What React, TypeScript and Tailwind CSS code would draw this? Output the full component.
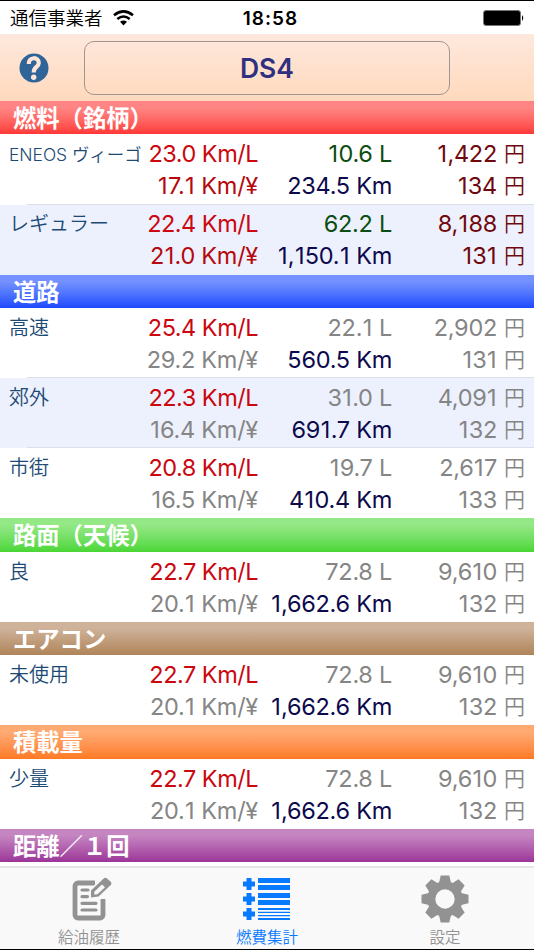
import React from "react";

type Cell = { text: string; color: string };
type Row = {
  name: string;
  small?: boolean;
  height: string;
  shaded?: boolean;
  divider?: boolean;
  top: [Cell, Cell, string];
  bottom: [Cell, Cell, string];
  yen: string;
};
type Section = { title: string; look: string; rows: Row[] };

const RED = "text-[#cb0710] tracking-[-0.5px]";
const DARK_RED = "text-[#b5090f]";
const GREEN = "text-[#0b4d12]";
const NAVY = "text-[#0c0a4d]";
const GRAY = "text-[#858585]";
const MAROON = "text-[#70090d]";

const row = (
  name: string,
  kmL: string,
  litres: string,
  price: string,
  kmYen: string,
  km: string,
  unit: string,
  extra: Partial<Row> = {},
  vivid = false,
): Row => ({
  name,
  height: "h-[70px] pt-px",
  top: [{ text: kmL, color: RED }, { text: litres, color: vivid ? GREEN : GRAY }, price],
  bottom: [{ text: kmYen, color: vivid ? DARK_RED : GRAY }, { text: km, color: NAVY }, unit],
  yen: vivid ? MAROON : GRAY,
  ...extra,
});

const sections: Section[] = [
  {
    title: "燃料（銘柄）",
    look: "h-[33px] from-[#ff8585] to-[#ff3737]",
    rows: [
      row("ENEOS ヴィーゴ", "23.0 Km/L", "10.6 L", "1,422", "17.1 Km/¥", "234.5 Km", "134", { small: true, height: "h-[71px] pt-px", divider: true }, true),
      row("レギュラー", "22.4 Km/L", "62.2 L", "8,188", "21.0 Km/¥", "1,150.1 Km", "131", { shaded: true, height: "h-[70px]" }, true),
    ],
  },
  {
    title: "道路",
    look: "h-[33px] from-[#7590ff] to-[#1f48ff]",
    rows: [
      row("高速", "25.4 Km/L", "22.1 L", "2,902", "29.2 Km/¥", "560.5 Km", "131", { divider: true }),
      row("郊外", "22.3 Km/L", "31.0 L", "4,091", "16.4 Km/¥", "691.7 Km", "132", { shaded: true, divider: true }),
      row("市街", "20.8 Km/L", "19.7 L", "2,617", "16.5 Km/¥", "410.4 Km", "133"),
    ],
  },
  {
    title: "路面（天候）",
    look: "h-[34px] from-[#94e886] to-[#49d634]",
    rows: [row("良", "22.7 Km/L", "72.8 L", "9,610", "20.1 Km/¥", "1,662.6 Km", "132")],
  },
  {
    title: "エアコン",
    look: "h-[33px] from-[#ceb299] to-[#b0845a]",
    rows: [row("未使用", "22.7 Km/L", "72.8 L", "9,610", "20.1 Km/¥", "1,662.6 Km", "132")],
  },
  {
    title: "積載量",
    look: "h-[34px] from-[#ffaa73] to-[#ff7a20]",
    rows: [row("少量", "22.7 Km/L", "72.8 L", "9,610", "20.1 Km/¥", "1,662.6 Km", "132")],
  },
  {
    title: "距離／１回",
    look: "h-[33px] from-[#c585c1] to-[#9b3498]",
    rows: [],
  },
];

// The digit 1 gets a little room on both sides so that it sits like the wider digits.
function Figures({ text }: { text: string }) {
  return (
    <>
      {text.split(/(1)/).map((part, i) =>
        part === "1" ? (
          <span key={i} className="px-[0.6px]">1</span>
        ) : (
          part
        ),
      )}
    </>
  );
}

function Line({ cells, yen }: { cells: [Cell, Cell, string]; yen: string }) {
  return (
    <div className="flex h-8 items-center justify-end whitespace-nowrap text-[23.5px] font-[380] leading-8 tracking-[-0.27px]">
      <span className={`w-[116px] text-right ${cells[0].color}`}><Figures text={cells[0].text} /></span>
      <span className={`w-[134px] text-right ${cells[1].color}`}><Figures text={cells[1].text} /></span>
      <span className={`flex w-[133px] justify-end ${yen}`}>
        <span><Figures text={cells[2]} /></span>
        <span className="ml-[7px] h-8 font-['Noto_Sans_CJK_JP',sans-serif] text-[21px] font-[350] leading-[28px] tracking-normal">円</span>
      </span>
    </div>
  );
}

function DataRow({ r }: { r: Row }) {
  return (
    <div className={`relative flex ${r.height} ${r.shaded ? "bg-[#edf1fd]" : "bg-white"}`}>
      <div
        className={`w-[142px] shrink-0 whitespace-nowrap pl-[9px] font-[350] text-[#1c4a75] ${
          r.small ? "pt-[4px] text-[17.4px]" : "pt-[3px] text-[20px]"
        } leading-8`}
      >
        {r.name}
      </div>
      <div className="flex flex-1 flex-col pr-[9px] pt-[3px]">
        <Line cells={r.top} yen={r.yen} />
        <Line cells={r.bottom} yen={r.yen} />
      </div>
      {r.divider && <div className="absolute bottom-0 left-[27px] right-0 h-px bg-[#dcdfe8]" />}
    </div>
  );
}

function NoteIcon() {
  return (
    <svg className="ml-[6px]" width="40" height="46" viewBox="0 0 40 46" fill="none">
      <path d="M23 7H6a3 3 0 0 0-3 3v29a3 3 0 0 0 3 3h22a3 3 0 0 0 3-3V23" stroke="#929292" strokeWidth="4.800" />
      <path d="M10 14h6M10 20.600h5.500M10 27.300h14M10 34h14" stroke="#929292" strokeWidth="3.200" strokeLinecap="round" />
      <path d="M17 23l1-9L31 0l9 7-14 15z" fill="#f9f9f9" />
      <path d="M19 21.500V14.500L32 2.300q1.500-1 3 .200l4 3.500q1 1.300 0 2.700L26.500 20.500z" fill="#929292" />
      <path d="M22 18.500l.5-3 7.500-7 3 2.700-7.500 7z" fill="#f9f9f9" />
    </svg>
  );
}

function ListIcon() {
  return (
    <svg width="48" height="44" viewBox="0 0 48 44" fill="#087aff">
      {[0, 15, 30].map((y) => (
        <path key={y} d={`M3.500 ${y + 1}h5v3.500h3.500v5h-3.500v3.500h-5v-3.500h-3.500v-5h3.500z`} />
      ))}
      <path d="M15 1h32v5h-32zM15 8h32v5h-32zM15 16h32v5h-32zM15 23h32v5h-32zM15 31h32v2h-32zM15 34.700h32v1.300h-32zM15 38h32v1.300h-32zM15 41h32v2h-32z" />
    </svg>
  );
}

function GearIcon() {
  return (
    <svg width="48" height="48" viewBox="-24 -24 48 48" fill="#929292">
      {[0, 45, 90, 135, 180, 225, 270, 315].map((a) => (
        <path key={a} d="M-6.500 -14L-4.300 -23.500H4.300L6.500 -14z" transform={`rotate(${a})`} />
      ))}
      <circle r="13.700" fill="none" stroke="#929292" strokeWidth="8" />
    </svg>
  );
}

function Tab({ label, active, children }: { label: string; active?: boolean; children: React.ReactNode }) {
  return (
    <div className="flex w-[178px] flex-col items-center">
      <div className="flex h-[62px] items-center justify-center">{children}</div>
      <div className={`text-[15.500px] font-[350] leading-4 ${active ? "text-[#087aff]" : "text-[#929292]"}`}>{label}</div>
    </div>
  );
}

export default function App() {
  return (
    <div className="flex h-[950px] w-[534px] flex-col overflow-hidden border-y border-black bg-white font-['Inter','Noto_Sans_CJK_JP',sans-serif]">
      <div className="grid h-[33px] shrink-0 grid-cols-3 items-center">
        <div className="flex items-center gap-[10px] pl-[10px] text-[18.500px] font-[350] leading-8 text-black">
          通信事業者
          <svg width="21" height="16" viewBox="0 0 21 16" fill="none" stroke="#000" strokeWidth="2.600">
            <path d="M1 5.200Q10.500-2.500 20 5.200M4.300 9Q10.500 4 16.700 9" />
            <path d="M7 11.800Q10.500 9.300 14 11.800L10.500 15.500z" fill="#000" stroke="none" />
          </svg>
        </div>
        <div className="pl-[7px] pt-[3px] text-center text-[19px] font-semibold tracking-[1px]">18:58</div>
        <div className="flex items-center justify-end pr-[9px]">
          <svg width="42" height="16" viewBox="0 0 42 16">
            <rect x=".5" y=".5" width="37" height="15" rx="2.500" fill="#000" stroke="#777" />
            <path d="M39 5q2.500 3 0 6z" fill="#000" />
          </svg>
        </div>
      </div>

      <div className="flex h-[67px] shrink-0 items-center bg-linear-to-b from-[#fee8dd] to-[#ffd9bd]">
        <svg className="ml-[19px]" width="30" height="30" viewBox="0 0 30 30" fill="none">
          <circle cx="15" cy="15" r="14.500" fill="#2e6497" />
          <path d="M9.800 11C9.500 3.500 19.800 3.500 19.800 9.800C19.800 14.500 14.700 13.500 14.700 19.500" stroke="#fee5d8" strokeWidth="4.200" />
          <circle cx="14.700" cy="24.300" r="2.700" fill="#fee5d8" />
        </svg>
        <div className="ml-[35px] flex h-[54px] w-[366px] items-center justify-center rounded-[10px] border border-[#a0958f] pt-[2px] text-[26.500px] font-semibold text-[#2f3080]">
          DS4
        </div>
      </div>

      <div className="flex flex-1 flex-col overflow-hidden">
        {sections.map((s) => (
          <React.Fragment key={s.title}>
            <div className={`flex shrink-0 items-center bg-linear-to-b from-20% pl-[13px] pt-[2px] text-[23.300px] font-bold leading-8 text-white ${s.look}`}>
              {s.title}
            </div>
            {s.rows.map((r) => (
              <DataRow key={r.name} r={r} />
            ))}
          </React.Fragment>
        ))}
      </div>

      <div className="flex h-[83px] shrink-0 border-t-2 border-[#e6e6e6] bg-[#f9f9f9]">
        <Tab label="給油履歴"><NoteIcon /></Tab>
        <Tab label="燃費集計" active><ListIcon /></Tab>
        <Tab label="設定"><GearIcon /></Tab>
      </div>
    </div>
  );
}
